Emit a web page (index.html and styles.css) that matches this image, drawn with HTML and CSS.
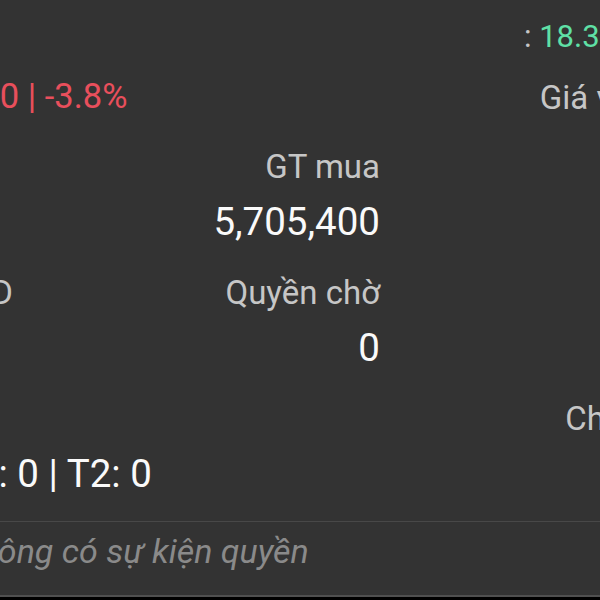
FILE: index.html
```html
<!DOCTYPE html>
<html lang="vi">
<head>
    <meta charset="UTF-8">
    <meta name="viewport" content="width=device-width, initial-scale=1.0">
    <title>Chi tiết danh mục</title>
    <link rel="stylesheet" href="styles.css">
</head>
<body>
    <div class="screen">
        <div class="sheet">
            <div class="grid">
                <div class="cell left">
                    <span class="label">Lãi/lỗ</span>
                    <span class="value down">-12,220,000 | -3.8%</span>
                </div>
                <div class="cell mid"></div>
                <div class="cell right">
                    <span class="quote">: <span class="up">18.35</span></span>
                    <span class="label">Giá vốn TB</span>
                </div>

                <div class="cell left">
                    <span class="label">KL</span>
                    <span class="value">300</span>
                </div>
                <div class="cell mid">
                    <span class="label">GT mua</span>
                    <span class="value">5,705,400</span>
                </div>
                <div class="cell right">
                    <span class="label">KL</span>
                    <span class="value">0</span>
                </div>

                <div class="cell left">
                    <span class="label">KL được TD</span>
                    <span class="value">0</span>
                </div>
                <div class="cell mid">
                    <span class="label">Quyền chờ</span>
                    <span class="value">0</span>
                </div>
                <div class="cell right"></div>

                <div class="cell left">
                    <span class="label">Chờ về</span>
                    <span class="value">T0: 0 | T1: 0 | T2: 0</span>
                </div>
                <div class="cell mid"></div>
                <div class="cell right">
                    <span class="label">Chờ mua</span>
                    <span class="value">0</span>
                </div>
            </div>

            <div class="events">Không có sự kiện quyền</div>
        </div>
    </div>
</body>
</html>
```

FILE: styles.css
```css
body {
    margin: 0;
    background-color: #000;
    font-family: Roboto, "Noto Sans", sans-serif;
    overflow: hidden;
}
.screen {
    height: 597px;
    background-color: #333333;
    overflow: hidden;
}
.sheet {
    margin-left: -159px;
    width: 856px;
}
.grid {
    display: grid;
    grid-template-columns: 250px 289px 317px;
    row-gap: 29px;
    padding-top: 21px;
}
.cell {
    display: flex;
    flex-direction: column;
    gap: 13px;
    white-space: nowrap;
    min-height: 97px;
}
.cell.mid,
.cell.right {
    align-items: flex-end;
}
.label {
    font-size: 33px;
    line-height: 40px;
    color: #c6c6c6;
}
.value {
    font-size: 38.5px;
    line-height: 44px;
    color: #fafafa;
}
.quote {
    font-size: 31px;
    line-height: 32px;
    color: #c6c6c6;
    margin: 0 80px 12px 0;
}
.down {
    font-size: 34.5px;
    color: #e94f5c;
}
.up {
    color: #5fe0a6;
}
.events {
    margin-top: 25px;
    padding: 9px 0 24px 118px;
    border-top: 1px solid #484848;
    border-bottom: 2px solid #505050;
    font-size: 34px;
    line-height: 40px;
    font-style: italic;
    color: #8a8a8a;
    white-space: nowrap;
}
```
